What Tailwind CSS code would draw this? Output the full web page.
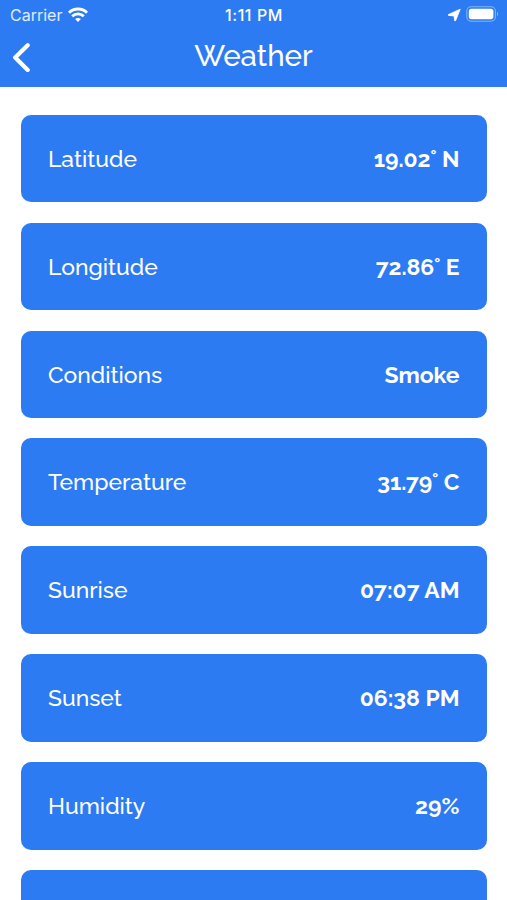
<!DOCTYPE html>
<html lang="en">
<head>
<meta charset="utf-8">
<title>Weather</title>
<script src="https://cdn.jsdelivr.net/npm/@tailwindcss/browser@4"></script>
</head>
<body class="flex h-[900px] flex-col overflow-hidden bg-white font-['Raleway','Lato',sans-serif] text-white">
<header class="h-[87.3px] shrink-0 bg-[#2d7bf2]">
  <div class="grid h-[30px] grid-cols-3 items-center pr-[8px] pl-[10px] font-['Inter','Liberation_Sans',sans-serif] text-[16px] leading-[30px]">
    <div class="flex items-center gap-[6px] text-white/85">
      <span>Carrier</span>
      <svg class="mb-[1px] h-[15px] w-[20px] text-white" viewBox="0 0 20 15" fill="none" stroke="currentColor" stroke-width="2.9"><path d="M1 5.7C6 .7 14 .7 19 5.7"/><path d="M4.2 9.3C7.6 6 12.4 6 15.8 9.3"/><path d="M10 14.9 7.1 12C8.6 10.5 11.4 10.5 12.9 12Z" fill="currentColor" stroke="none"/></svg>
    </div>
    <div class="-ml-px text-center font-medium tracking-[0.6px]">1:11 PM</div>
    <div class="flex items-center justify-end gap-[5px] pb-[2px]">
      <svg class="mt-[2px] h-[14px] w-[14px]" viewBox="0 0 14 14" fill="currentColor"><path d="M13.2 1.2 8.6 12.6Q7.9 13.6 7.6 12.6L7.1 7.9 1.6 7.4Q.6 7 1.6 6.5Z" stroke="currentColor" stroke-width=".9" stroke-linejoin="round"/></svg>
      <svg class="h-[16px] w-[33px]" viewBox="0 0 33 16" fill="none"><rect x=".8" y=".8" width="28.6" height="14.4" rx="4.4" stroke="#84b3f8" stroke-width="1.1"/><rect x="2.8" y="2.8" width="24.6" height="10.4" rx="2.6" fill="white"/><path d="M31 5.5Q33.3 8 31 10.5Z" fill="#84b3f8"/></svg>
    </div>
  </div>
  <div class="grid h-[54px] grid-cols-[60px_1fr_60px] items-center">
    <svg class="ml-[11px] h-[30px] w-[20px]" viewBox="0 0 20 30" fill="none" stroke="white" stroke-width="4.2" stroke-linecap="round" stroke-linejoin="round"><path d="M16.7 3.2 4.2 15.6 16.7 28"/></svg>
    <h1 class="pb-[2px] text-center text-[29.5px] leading-[50px] font-medium">Weather</h1>
  </div>
</header>
<main class="flex min-h-0 flex-1 flex-col gap-[20.4px] overflow-hidden pr-[20.5px] pl-[21px] pt-[27.5px] text-[22.9px] leading-[34px] lining-nums [&>div]:flex [&>div]:h-[87.5px] [&>div]:shrink-0 [&>div]:items-center [&>div]:justify-between [&>div]:rounded-[10px] [&>div]:bg-[#2d7bf2] [&>div]:px-[27px] [&>div]:pt-[0.5px] [&_b]:font-bold [&_b]:oldstyle-nums [&_span]:font-medium">
  <div><span>Latitude</span><b>19.02˚ N</b></div>
  <div><span>Longitude</span><b>72.86˚ E</b></div>
  <div><span>Conditions</span><b>Smoke</b></div>
  <div><span>Temperature</span><b>31.79˚ C</b></div>
  <div><span>Sunrise</span><b>07:07 AM</b></div>
  <div><span>Sunset</span><b>06:38 PM</b></div>
  <div><span>Humidity</span><b>29%</b></div>
  <section class="min-h-0 flex-1 rounded-t-[10px] bg-[#2d7bf2]"></section>
</main>
</body>
</html>
